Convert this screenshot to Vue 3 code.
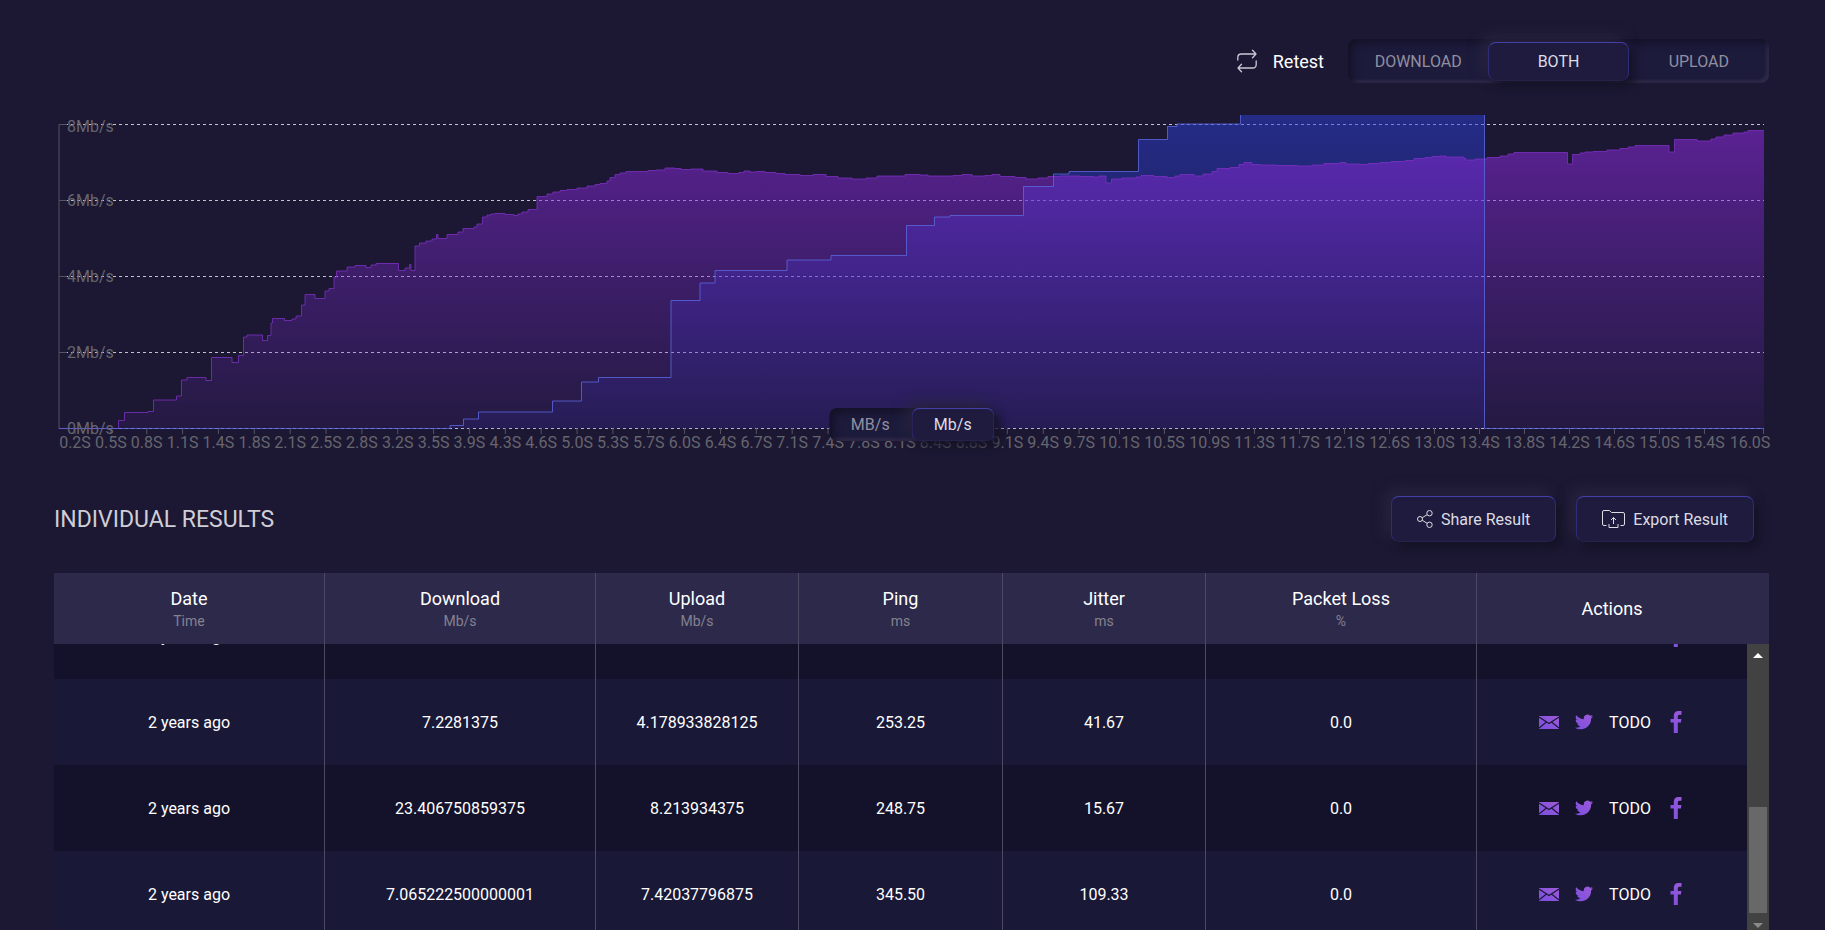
<script setup>
import { ref, onMounted } from 'vue'

const directions = ['DOWNLOAD', 'BOTH', 'UPLOAD']
const direction = ref('BOTH')

const units = ['MB/s', 'Mb/s']
const unit = ref('Mb/s')

const yLabels = [
  { text: '8Mb/s', line: 124.5, base: 132 },
  { text: '6Mb/s', line: 200.5, base: 206 },
  { text: '4Mb/s', line: 276.5, base: 282 },
  { text: '2Mb/s', line: 352.5, base: 358 },
  { text: '0Mb/s', line: 428.5, base: 434 }
]

// narrow labels first, then the wider ones from 10 seconds on
const shortTimes = '0.2 0.5 0.8 1.1 1.4 1.8 2.1 2.5 2.8 3.2 3.5 3.9 4.3 4.6 5.0 5.3 5.7 6.0 6.4 6.7 7.1 7.4 7.8 8.1 8.4 8.8 9.1 9.4 9.7'.split(' ')
const longTimes = '10.1 10.5 10.9 11.3 11.7 12.1 12.6 13.0 13.4 13.8 14.2 14.6 15.0 15.4'.split(' ')
const xLabels = [
  ...shortTimes.map((t, i) => ({ text: t + 'S', x: 75 + i * 35.86, tick: 75 + i * 35.86 })),
  ...longTimes.map((t, i) => ({ text: t + 'S', x: 1119.5 + i * 45, tick: 1119.5 + i * 45 })),
  { text: '16.0S', x: 1750, tick: 1763.5 }
]

const download = [
  [59, 428.5], [118.5, 420.5], [124.5, 412.5], [148, 411.5], [153.5, 400], [176.5, 396],
  [181.5, 380], [187, 377.5], [206, 380.5], [211.5, 357.5], [232, 362.5], [238.5, 355.5],
  [243.5, 337], [247, 335], [262.5, 340.5], [267.5, 335.5], [271, 323], [272.5, 318.5],
  [284.5, 320.5], [292, 319], [296, 316], [301.5, 305], [305, 294.5], [315, 298.5],
  [325, 291], [329, 288.5], [334, 277], [336.5, 271], [347, 267], [355, 265.5],
  [366, 267.5], [371, 265], [376, 263.5], [398.5, 270.5], [405, 268], [409.5, 264.5],
  [411, 270.5], [415, 246], [419.5, 243], [426, 241], [432, 239], [436.5, 234.5],
  [438, 238.5], [447, 234.5], [458, 232], [463, 228.5], [474, 227], [477, 224],
  [482.5, 217], [487, 215], [491, 214], [495, 213.5], [505, 214.5], [514, 215.5],
  [518, 214], [522, 212], [528, 209.5], [537, 196.5], [547, 194], [553, 192],
  [560, 190.5], [567, 189.5], [577, 188], [587, 186], [595, 184.5], [600, 183.5],
  [607, 181], [610, 177.5], [615, 174.5], [620, 173], [626, 171.5], [640, 171.5],
  [648, 170.5], [656, 170], [665, 168], [675, 168.5], [681, 169.5], [691, 169],
  [703, 171], [717, 172.5], [728, 173.5], [739, 172.5], [744, 171], [750, 172],
  [756, 171.5], [765, 172.5], [776, 173.5], [785, 174.5], [800, 175.5], [813, 174.5],
  [826, 176.5], [838, 178], [852, 179], [866, 178], [877, 176], [890, 176],
  [905, 174.5], [920, 175], [928, 176], [940, 176], [953, 175.5], [962, 174.5],
  [972, 176], [985, 175.5], [992, 174.5], [1000, 176.5], [1015, 177.5], [1026, 179],
  [1038, 178], [1048, 176.5], [1060, 176], [1080, 176.5], [1093, 177], [1099, 176],
  [1106, 183], [1111.5, 179], [1122, 178], [1136, 177], [1141, 175.5], [1154, 176.5],
  [1167, 177.5], [1175, 176], [1180, 174.5], [1194, 176], [1203, 174], [1212, 171.5],
  [1217, 168.5], [1230, 167.5], [1239, 164.5], [1244, 162.5], [1252, 164.5], [1260, 165],
  [1276, 165.5], [1297, 166], [1312, 165], [1324, 163.5], [1340, 162.5], [1346, 164],
  [1360, 164.5], [1368, 163.5], [1380, 162.5], [1391, 161.5], [1405, 160.5], [1414, 158.5],
  [1425, 157.5], [1432, 156.5], [1440, 156], [1446, 157], [1464, 158.5], [1466, 160],
  [1475, 159], [1487, 157.5], [1500, 156], [1508, 154], [1514, 152.5], [1567.5, 164],
  [1572.5, 154.5], [1580, 153], [1585, 152], [1593, 151.5], [1607, 150], [1620, 148.5],
  [1628, 147], [1635, 145.5], [1669, 152], [1674.5, 139.5], [1697, 141], [1711, 139],
  [1716, 137], [1724, 135], [1733, 133], [1744, 132], [1748, 130.5], [1764, 130.5]
]

const upload = [
  [59, 428.5], [450, 425.5], [463.5, 419], [478.5, 412], [552.5, 401], [581.5, 382],
  [598.5, 377.5], [671, 300.5], [700, 283], [715, 270.5], [787, 260], [831, 255.5],
  [906.5, 225.5], [934.5, 217], [950, 215.5], [1023.5, 186.5], [1053.5, 174], [1069, 171.5],
  [1138.5, 139.5], [1167.5, 126.5], [1177, 124], [1240.5, 110], [1484.5, 428.5], [1764, 428.5]
]

const stepLine = (points) => {
  const [first, ...rest] = points
  return `M${first[0]} ${first[1]}` + rest.map(([x, y]) => `H${x}V${y}`).join('')
}

const downloadLine = stepLine(download)
const uploadLine = stepLine(upload)

const columns = [
  { name: 'Date', unit: 'Time' },
  { name: 'Download', unit: 'Mb/s' },
  { name: 'Upload', unit: 'Mb/s' },
  { name: 'Ping', unit: 'ms' },
  { name: 'Jitter', unit: 'ms' },
  { name: 'Packet Loss', unit: '%' },
  { name: 'Actions' }
]

const results = [
  { id: 1, date: '2 years ago' },
  { id: 2, date: '2 years ago', download: '7.2281375', upload: '4.178933828125', ping: '253.25', jitter: '41.67', loss: '0.0' },
  { id: 3, date: '2 years ago', download: '23.406750859375', upload: '8.213934375', ping: '248.75', jitter: '15.67', loss: '0.0' },
  { id: 4, date: '2 years ago', download: '7.065222500000001', upload: '7.42037796875', ping: '345.50', jitter: '109.33', loss: '0.0' }
]

const scroller = ref(null)

const scrollRows = (amount) => {
  scroller.value.scrollTop += amount
}

onMounted(() => {
  scroller.value.scrollTop = scroller.value.scrollHeight
})
</script>

<template>
  <main class="page">
    <div class="toolbar">
      <button class="retest">
        <svg width="20" height="24" viewBox="0 0 20 24" fill="none" stroke="currentColor" stroke-width="1.3" stroke-linecap="round" stroke-linejoin="round">
          <path d="M.8 11V8.500Q.8 5 4.300 5H19M15.500 1.300L19 5L15.500 8.700" />
          <path d="M19.200 12V15.500Q19.200 19 15.700 19H1M4.500 15.300L1 19L4.500 22.700" />
        </svg>
        Retest
      </button>
      <div class="toggle">
        <button
          v-for="item in directions"
          :key="item"
          :class="{ active: item === direction }"
          @click="direction = item"
        >{{ item }}</button>
      </div>
    </div>

    <div class="chart">
      <svg viewBox="54 100 1715 356">
        <defs>
          <linearGradient id="downloadFill" x1="0" y1="0" x2="0" y2="1">
            <stop offset="0" stop-color="#8528d2" stop-opacity="0.6" />
            <stop offset="1" stop-color="#7028c8" stop-opacity="0.1" />
          </linearGradient>
          <linearGradient id="uploadFill" x1="0" y1="0" x2="0" y2="1">
            <stop offset="0" stop-color="#2b40dc" stop-opacity="0.5" />
            <stop offset="1" stop-color="#2b30c0" stop-opacity="0.14" />
          </linearGradient>
          <clipPath id="plot">
            <rect x="58" y="115" width="1707" height="315" />
          </clipPath>
        </defs>
        <g class="grid">
          <line v-for="l in yLabels" :key="l.text" x1="59" :y1="l.line" x2="1764" :y2="l.line" />
        </g>
        <g class="axis">
          <path d="M59 124.500V428.500" />
          <line v-for="l in yLabels" :key="l.text" x1="59" :y1="l.line" x2="67" :y2="l.line" />
          <line v-for="l in xLabels" :key="l.text" :x1="l.tick" y1="428" :x2="l.tick" y2="434" />
        </g>
        <g clip-path="url(#plot)">
          <path :d="uploadLine + 'Z'" fill="url(#uploadFill)" />
          <path :d="downloadLine + 'V428.500Z'" fill="url(#downloadFill)" />
          <path class="download-line" :d="downloadLine" />
          <path class="upload-line" :d="uploadLine" />
        </g>
        <g class="labels">
          <text v-for="l in yLabels" :key="l.text" x="67" :y="l.base">{{ l.text }}</text>
          <text v-for="l in xLabels" :key="l.text" :x="l.x" y="448" text-anchor="middle">{{ l.text }}</text>
        </g>
      </svg>
      <div class="toggle units">
        <button
          v-for="item in units"
          :key="item"
          :class="{ active: item === unit }"
          @click="unit = item"
        >{{ item }}</button>
      </div>
    </div>

    <div class="heading">
      <h2>INDIVIDUAL RESULTS</h2>
      <button class="raised">
        <svg width="16" height="18" viewBox="0 0 16 18" fill="none" stroke="currentColor" stroke-width="1">
          <circle cx="3" cy="9" r="2.500" />
          <circle cx="12.500" cy="3.200" r="2.700" />
          <circle cx="12.500" cy="14.800" r="2.700" />
          <path d="M5.200 7.700L10.200 4.700M5.200 10.300L10.200 13.300" />
        </svg>
        Share Result
      </button>
      <button class="raised">
        <svg width="23" height="18" viewBox="0 0 23 18" fill="none" stroke="currentColor" stroke-width="1" stroke-linejoin="round">
          <path d="M4.500 15.500H2Q.5 15.500 .5 14V2Q.5 .5 2 .5H7.500L9.500 2.500H21Q22.500 2.500 22.500 4V14Q22.500 15.500 21 15.500H18.500" />
          <path d="M11.500 14V7.500M9 10L11.500 7.500L14 10M7 14V17.500H16V14" />
        </svg>
        Export Result
      </button>
    </div>

    <section class="results">
      <table class="head">
        <thead>
          <tr>
            <th v-for="col in columns" :key="col.name">
              {{ col.name }}
              <small v-if="col.unit">{{ col.unit }}</small>
            </th>
          </tr>
        </thead>
      </table>
      <div class="body">
        <div ref="scroller" class="scroller">
          <table>
            <tbody>
              <tr v-for="row in results" :key="row.id">
                <td>{{ row.date }}</td>
                <td>{{ row.download }}</td>
                <td>{{ row.upload }}</td>
                <td>{{ row.ping }}</td>
                <td>{{ row.jitter }}</td>
                <td>{{ row.loss }}</td>
                <td>
                  <div class="actions">
                    <a href="#" aria-label="Email">
                      <svg width="20" height="13" viewBox="0 0 20 13">
                        <rect width="20" height="13" fill="url(#iconFill)" />
                        <path d="M0 1L10 7.500L20 1M0 12L7.500 6M20 12L12.500 6" fill="none" stroke="#1a1936" stroke-width="1.2" />
                      </svg>
                    </a>
                    <a href="#" aria-label="Twitter">
                      <svg width="18" height="16" viewBox="0 2 24 20">
                        <path fill="url(#iconFill)" d="M23.950 4.570a10 10 0 0 1-2.820.770 4.960 4.960 0 0 0 2.160-2.720c-.95.550-2 .950-3.130 1.180a4.920 4.920 0 0 0-8.380 4.480C7.690 8.090 4.070 6.130 1.640 3.160a4.820 4.820 0 0 0-.67 2.480c0 1.710.87 3.210 2.190 4.100a4.900 4.900 0 0 1-2.230-.620v.060a4.920 4.920 0 0 0 3.950 4.830 5 5 0 0 1-2.210.080 4.940 4.940 0 0 0 4.600 3.420A9.870 9.870 0 0 1 0 19.540a14 14 0 0 0 7.560 2.210c9.050 0 14-7.500 14-13.980 0-.210 0-.420-.020-.630a9.940 9.940 0 0 0 2.460-2.550z" />
                      </svg>
                    </a>
                    <a href="#">TODO</a>
                    <a href="#" aria-label="Facebook">
                      <svg width="18" height="22" viewBox="0 0 18 22">
                        <path fill="url(#iconFill)" d="M14.500 0V3.800H12.300Q10.800 3.800 10.800 5.300V8H14.400L13.900 11.600H10.800V22H6.800V11.600H3.500V8H6.800V4.800Q6.800 0 11.600 0Z" />
                      </svg>
                    </a>
                  </div>
                </td>
              </tr>
            </tbody>
          </table>
        </div>
        <div class="scrollbar">
          <button aria-label="Scroll up" @click="scrollRows(-86)"></button>
          <div class="thumb"></div>
          <button aria-label="Scroll down" class="down" @click="scrollRows(86)"></button>
        </div>
      </div>
    </section>

    <svg class="defs" width="0" height="0">
      <linearGradient id="iconFill" x1="0" y1="1" x2="1" y2="0">
        <stop offset="0" stop-color="#7b4fe0" />
        <stop offset="1" stop-color="#9d5ad8" />
      </linearGradient>
    </svg>
  </main>
</template>

<style>
html,
body {
  height: 100%;
  overflow: hidden;
  background: #1c1833;
}
</style>

<style scoped>
.page {
  padding: 39px 56px 0 54px;
  color: #fff;
  font-family: Roboto, sans-serif;
  font-size: 16px;
}
button {
  padding: 0;
  border: 0;
  background: none;
  color: inherit;
  font: inherit;
  cursor: pointer;
}
.toolbar {
  display: flex;
  justify-content: flex-end;
  align-items: center;
  gap: 24px;
}
.retest {
  display: flex;
  align-items: center;
  gap: 16px;
  font-size: 18px;
}
.retest svg {
  color: #c9c7d6;
}
.toggle {
  display: flex;
  box-sizing: border-box;
  width: 421px;
  height: 44px;
  padding: 3px 0 2px;
  border-radius: 8px;
  background: #1d1b3c;
  box-shadow: inset 4px 4px 8px #131126, inset -3px -3px 3px #312c4a;
}
.toggle button {
  flex: 1;
  border: 1px solid transparent;
  color: #908f9f;
}
.toggle .active,
.raised {
  border: 1px solid #25224a;
  border-top-color: #4340a8;
  border-left-color: #2f2c78;
  border-right-color: #2f2c78;
  border-radius: 8px;
  background: #1e1b3f;
  color: #dddce2;
  box-shadow: 5px 5px 10px #141226, -5px -5px 14px #2a2540;
}
.chart {
  position: relative;
  margin-top: 17px;
}
.chart svg {
  display: block;
  width: 100%;
  overflow: visible;
}
.grid line {
  stroke: #c4c3cc;
  stroke-dasharray: 3 3;
}
.axis {
  stroke: #55535f;
  fill: none;
}
.download-line {
  fill: none;
  stroke: #7a30c0;
  stroke-opacity: 0.8;
}
.upload-line {
  fill: none;
  stroke: #5b68e0;
  stroke-opacity: 0.8;
}
.labels {
  fill: #66656e;
  font-size: 16px;
}
.units {
  position: absolute;
  top: 308px;
  left: 50%;
  width: 165px;
  height: 33px;
  padding: 0;
  transform: translateX(-50%);
}
.heading {
  display: flex;
  align-items: center;
  gap: 20px;
  margin-top: 40px;
  padding-right: 15px;
}
h2 {
  flex: 1;
  margin: 0;
  color: #cfced6;
  font-size: 23px;
  font-weight: 400;
}
.raised {
  display: flex;
  align-items: center;
  gap: 8px;
  height: 46px;
  padding: 0 25px;
}
.results {
  margin-top: 31px;
}
table {
  width: 100%;
  border-collapse: separate;
  border-spacing: 0;
  table-layout: fixed;
}
.head {
  background: #2c294b;
}
th,
td {
  box-sizing: border-box;
  width: 203px;
  padding: 0;
  border-right: 1px solid #4d4963;
  text-align: center;
}
th:nth-child(1),
th:nth-child(2),
th:nth-child(6),
td:nth-child(1),
td:nth-child(2),
td:nth-child(6) {
  width: 271px;
}
th:nth-child(4),
td:nth-child(4) {
  width: 204px;
}
/* the last column takes the rest, in the header also the scrollbar's width */
th:last-child,
td:last-child {
  width: auto;
  border-right: 0;
}
th:last-child {
  padding-right: 22px;
}
th {
  height: 71px;
  font-size: 18px;
  font-weight: 400;
}
small {
  display: block;
  margin-top: 4px;
  color: #84828f;
  font-size: 14px;
}
.body {
  display: flex;
}
.scroller {
  flex: 1;
  height: 293px;
  overflow-y: auto;
  scrollbar-width: none;
}
td {
  height: 86px;
}
tbody tr {
  background: #1a1837;
}
tbody tr:nth-child(odd) {
  background: #14122a;
}
.actions {
  display: flex;
  justify-content: center;
  align-items: center;
  gap: 16px;
}
.actions a {
  display: flex;
  color: inherit;
  text-decoration: none;
}
.scrollbar {
  display: flex;
  flex-direction: column;
  justify-content: space-between;
  align-items: center;
  width: 22px;
  background: #424242;
}
.scrollbar button {
  width: 22px;
  height: 22px;
}
.scrollbar button::before {
  content: '';
  display: block;
  width: 0;
  margin: auto;
  border: 5px solid transparent;
  border-top-width: 0;
  border-bottom-color: #fff;
}
.scrollbar .down {
  height: 24px;
}
.scrollbar .down::before {
  border-width: 5px 5px 0;
  border-color: #8a8a8a transparent transparent;
}
.thumb {
  width: 18px;
  height: 106px;
  margin-top: auto;
  background: #686868;
}
.defs {
  position: absolute;
}
</style>
